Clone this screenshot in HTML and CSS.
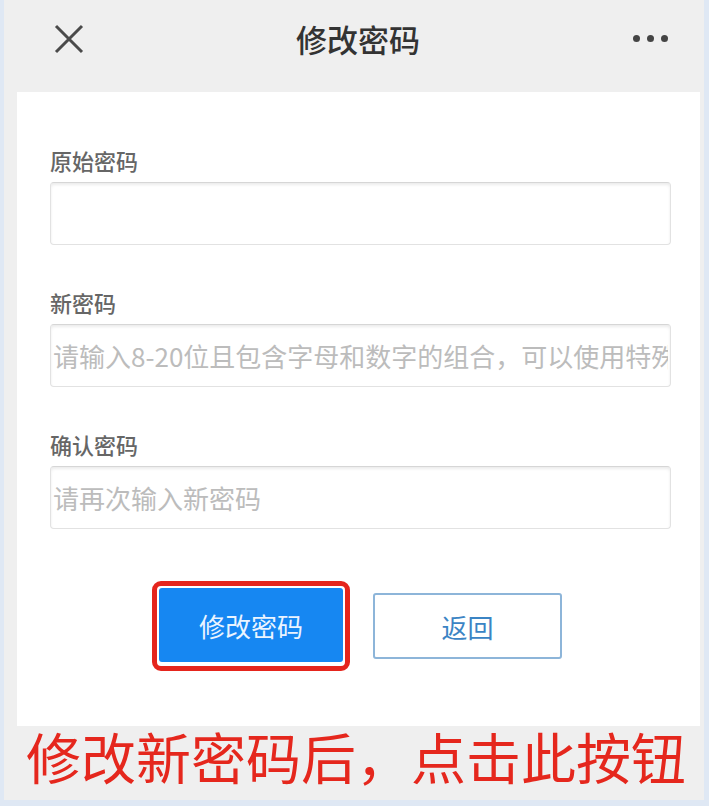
FILE: index.html
```html
<!DOCTYPE html>
<html lang="zh-CN">
<head>
    <meta charset="UTF-8">
    <meta name="viewport" content="width=device-width, initial-scale=1.0">
    <title>修改密码</title>
    <link rel="stylesheet" href="styles.css">
</head>
<body>

<div class="screen">
    <!-- Top navigation bar -->
    <div class="navbar">
        <span class="nav-close">
            <svg width="30" height="30" viewBox="0 0 30 30">
                <path d="M2 2 L28 28 M28 2 L2 28" stroke="#4a4a4a" stroke-width="3" fill="none"/>
            </svg>
        </span>
        <span class="nav-title">修改密码</span>
        <span class="nav-more">
            <i></i><i></i><i></i>
        </span>
    </div>

    <!-- Password form -->
    <div class="card">
        <div class="field">
            <label class="field-label">原始密码</label>
            <input class="field-input" type="password">
        </div>
        <div class="field">
            <label class="field-label">新密码</label>
            <input class="field-input" type="password" placeholder="请输入8-20位且包含字母和数字的组合，可以使用特殊字符">
        </div>
        <div class="field">
            <label class="field-label">确认密码</label>
            <input class="field-input" type="password" placeholder="请再次输入新密码">
        </div>

        <div class="actions">
            <span class="highlight">
                <button class="btn btn-primary">修改密码</button>
            </span>
            <button class="btn btn-default">返回</button>
        </div>
    </div>

    <div class="caption">修改新密码后，点击此按钮</div>
</div>

</body>
</html>
```

FILE: styles.css
```css
body {
    margin: 0;
    font-family: "Noto Sans CJK SC", "Noto Sans", sans-serif;
    background-color: #dfe8f4;
}
.screen {
    width: 700px;
    height: 800px;
    margin-left: 4px;
    background-color: #efefef;
    box-sizing: border-box;
    overflow: hidden;
}
.navbar {
    height: 77px;
    display: grid;
    grid-template-columns: 1fr auto 1fr;
    align-items: center;
    padding: 0 36px 0 50px;
}
.nav-close {
    display: flex;
    align-items: center;
}
.nav-title {
    font-size: 31px;
    font-weight: 500;
    color: #333;
    margin-left: -6px;
}
.nav-more {
    display: flex;
    justify-content: flex-end;
    gap: 7px;
}
.nav-more i {
    width: 7px;
    height: 7px;
    border-radius: 50%;
    background-color: #444;
}
.card {
    margin: 15px 4px 0 13px;
    background-color: #fff;
    padding: 56px 29px 55px 33px;
}
.field {
    margin-bottom: 45px;
}
.field:last-of-type {
    margin-bottom: 0;
}
.field-label {
    display: block;
    height: 24px;
    line-height: 24px;
    font-size: 22px;
    font-weight: 500;
    color: #666;
    margin-bottom: 10px;
}
.field-input {
    display: block;
    width: 100%;
    height: 63px;
    box-sizing: border-box;
    padding: 0 2px;
    border: 1px solid #e2e2e2;
    border-top-color: #d6d6d6;
    border-radius: 4px;
    box-shadow: inset 0 2px 3px rgba(0, 0, 0, 0.08);
    font-family: inherit;
    font-size: 26px;
    color: #333;
    outline: none;
}
.field-input::placeholder {
    color: #bcbcbc;
}
.actions {
    margin-top: 52px;
    display: flex;
    justify-content: center;
    align-items: center;
    gap: 23px;
    padding-right: 7px;
}
.highlight {
    display: flex;
    border: 5px solid #e5251d;
    border-radius: 9px;
    padding: 2px 2px 4px 2px;
    background-color: #fff;
}
.btn {
    font-family: inherit;
    font-size: 26px;
    border-radius: 3px;
    cursor: pointer;
}
.btn-primary {
    width: 184px;
    height: 74px;
    background-color: #1687f2;
    border: none;
    color: #eaf4ff;
}
.btn-default {
    width: 189px;
    height: 66px;
    background-color: #fff;
    border: 2px solid #8db5d9;
    color: #3b84c4;
}
.caption {
    height: 75px;
    line-height: 58px;
    padding-left: 22px;
    font-size: 55px;
    color: #e5271d;
    white-space: nowrap;
}
```
